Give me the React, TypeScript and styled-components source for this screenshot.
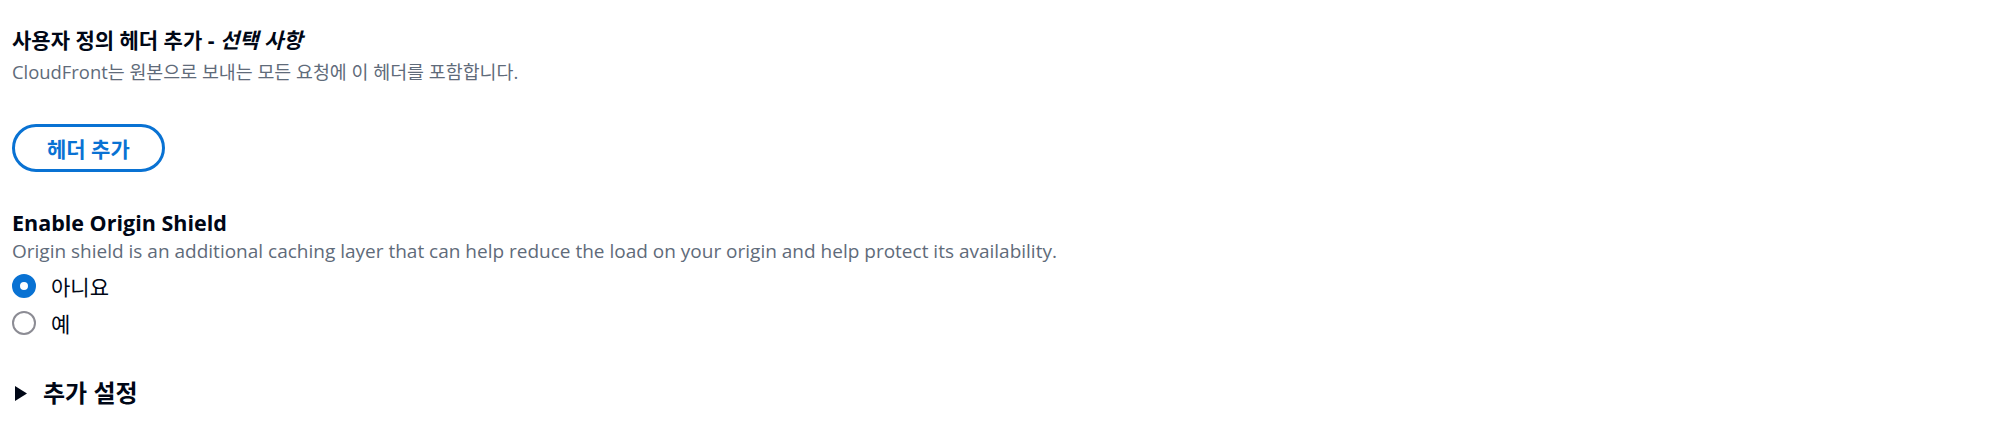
import { useState } from "react";
import styled, { createGlobalStyle } from "styled-components";

const GlobalStyle = createGlobalStyle`
  body {
    margin: 0;
    background: #ffffff;
    font-family: "Open Sans", "Noto Sans CJK KR", sans-serif;
    color: #000716;
  }
`;

const Page = styled.div`
  display: flex;
  flex-direction: column;
  align-items: flex-start;
  padding: 27px 12px 0;
`;

const Field = styled.div<{ $gap?: number }>`
  display: flex;
  flex-direction: column;
  margin-top: ${(p) => p.$gap ?? 0}px;
`;

const Label = styled.div<{ $size?: number }>`
  font-size: ${(p) => p.$size ?? 21.5}px;
  line-height: 27px;
  font-weight: 700;
  color: #000716;
`;

const Optional = styled.i`
  font-weight: 700;
`;

const Hint = styled.div<{ $size?: number; $gap?: number }>`
  margin-top: ${(p) => p.$gap ?? 2}px;
  font-size: ${(p) => p.$size ?? 19}px;
  line-height: 26px;
  color: #5f6b7a;
`;

const PillButton = styled.button`
  margin-top: 39px;
  height: 48px;
  padding: 0 32px;
  border: 3px solid #0972d3;
  border-radius: 24px;
  background: #ffffff;
  color: #0972d3;
  font-family: inherit;
  font-size: 21px;
  font-weight: 700;
  cursor: pointer;
`;

const RadioGroup = styled.div`
  display: flex;
  flex-direction: column;
  margin-top: 3px;
`;

const RadioRow = styled.label`
  display: flex;
  align-items: center;
  gap: 15px;
  height: 37px;
  font-size: 21px;
  color: #000716;
  cursor: pointer;
`;

const RadioDot = styled.span<{ $checked: boolean }>`
  box-sizing: border-box;
  width: 24px;
  height: 24px;
  border-radius: 50%;
  border: ${(p) => (p.$checked ? "8px solid #0972d3" : "2.5px solid #8c8c94")};
  background: #ffffff;
`;

const Expander = styled.div`
  display: flex;
  align-items: center;
  gap: 16px;
  margin-top: 37px;
  padding-left: 3px;
  font-size: 24px;
  line-height: 30px;
  font-weight: 700;
  color: #000716;
  cursor: pointer;
`;

const Caret = () => (
  <svg width="12" height="15" viewBox="0 0 12 15">
    <path d="M0 0 L12 7.5 L0 15 Z" fill="#000716" />
  </svg>
);

const options = [
  { id: "no", label: "아니요" },
  { id: "yes", label: "예" },
];

export default function App() {
  const [shield, setShield] = useState("no");

  return (
    <>
      <GlobalStyle />
      <Page>
        <Field>
          <Label $size={21}>
            사용자 정의 헤더 추가 - <Optional>선택 사항</Optional>
          </Label>
          <Hint $size={18.4} $gap={5}>
            CloudFront는 원본으로 보내는 모든 요청에 이 헤더를 포함합니다.
          </Hint>
        </Field>
        <PillButton>헤더 추가</PillButton>
        <Field $gap={37}>
          <Label>Enable Origin Shield</Label>
          <Hint>
            Origin shield is an additional caching layer that can help reduce the load on your origin and help
            protect its availability.
          </Hint>
        </Field>
        <RadioGroup>
          {options.map((o) => (
            <RadioRow key={o.id} onClick={() => setShield(o.id)}>
              <RadioDot $checked={shield === o.id} />
              {o.label}
            </RadioRow>
          ))}
        </RadioGroup>
        <Expander>
          <Caret />
          추가 설정
        </Expander>
      </Page>
    </>
  );
}
